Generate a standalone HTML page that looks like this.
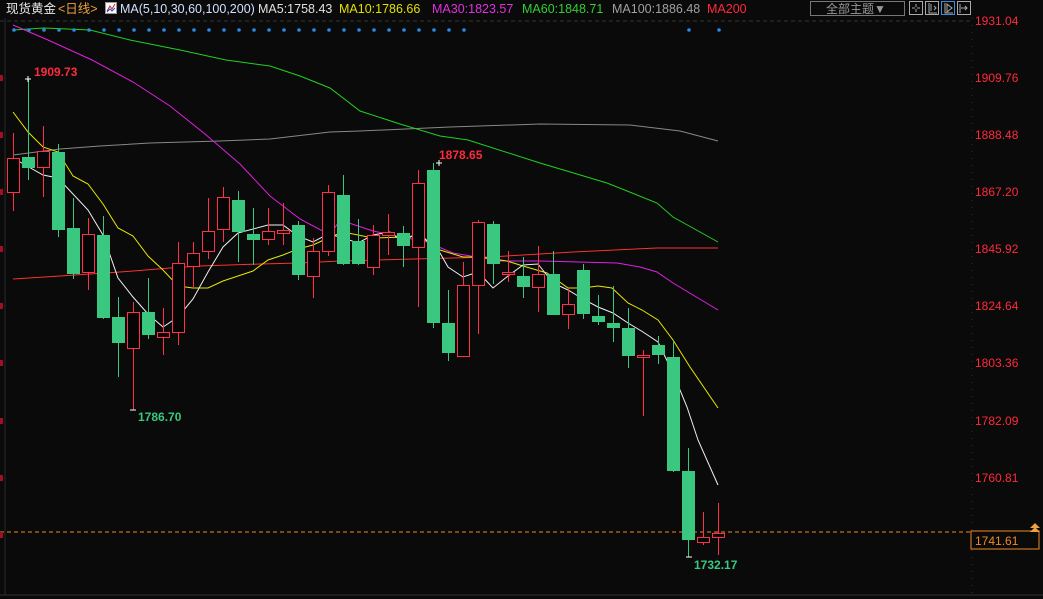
<!DOCTYPE html>
<html><head><meta charset="utf-8"><style>
body{margin:0;background:#0a0a0a;width:1043px;height:599px;overflow:hidden;font-family:"Liberation Sans","Noto Sans CJK SC",sans-serif}
svg{position:absolute;left:0;top:0}
.hd span{position:absolute;top:1px;font-size:12.5px;white-space:nowrap;color:#cfe0ff;line-height:16px}
</style></head><body>
<svg id="s" width="1043" height="599" xmlns="http://www.w3.org/2000/svg">
<line x1="5" y1="18" x2="5" y2="595" stroke="#2a2a2a"/>
<line x1="972" y1="18" x2="972" y2="595" stroke="#333" stroke-dasharray="1,6"/>
<line x1="0" y1="21" x2="970" y2="21" stroke="#333" stroke-dasharray="4,3"/>
<line x1="0" y1="595" x2="1043" y2="595" stroke="#333"/>
<line x1="0" y1="532" x2="970" y2="532" stroke="#f08a20" stroke-dasharray="4,3"/>
<g id="lines" fill="none" stroke-width="1"></g>
<g id="c"></g>
<g font-size="12" fill="#ff2a3a">
<text x="975" y="25">1931.04</text><text x="975" y="82">1909.76</text><text x="975" y="139">1888.48</text><text x="975" y="196">1867.20</text><text x="975" y="253">1845.92</text><text x="975" y="310">1824.64</text><text x="975" y="367">1803.36</text><text x="975" y="425">1782.09</text><text x="975" y="482">1760.81</text>
</g>
<rect x="971" y="531" width="68" height="18" fill="#0a0a0a" stroke="#f08a20"/>
<text x="975" y="545" font-size="12" fill="#f08a20">1741.61</text>
<path d="M1030 528 l5 -5 l5 5 z M1030 532 l5 -5 l5 5 z" fill="#f0a040"/>
<g font-size="12" font-weight="bold">
<text x="34" y="76" fill="#ff2a3a">1909.73</text>
<text x="138" y="421" fill="#3ac77f">1786.70</text>
<text x="439" y="159" fill="#ff2a3a">1878.65</text>
<text x="694" y="569" fill="#3ac77f">1732.17</text>
</g>
<g stroke="#fff"><path d="M25 79h6M28 76v6M130 410h6M436 163h6M439 160v6M686 557h6"/></g>
<rect x="810.5" y="1.5" width="94" height="14" fill="#0a0a0a" stroke="#777"/>
<text x="826" y="13" font-size="12" fill="#999">全部主题▼</text>
<g fill="none" stroke="#aaa">
<rect x="909.5" y="1.5" width="13" height="13"/><rect x="925.5" y="1.5" width="13" height="13"/><rect x="941.5" y="1.5" width="13" height="13" stroke="#3a8fe0"/><rect x="957.5" y="1.5" width="13" height="13"/>
<path d="M916 4v3M916 9v3M912 8h3M917 8h3M929 3v10h8M931 4v7M934 6l2 2-2 2M945 3v10h8M947 4l5 4-5 4z" />
<path d="M960 4v9M961 8h6M965 6l2 2-2 2"/>
</g>
<rect x="105.5" y="2.5" width="11" height="11" fill="#fff" stroke="#999"/>
<path d="M107 11l3-5 2 3 3-5" fill="none" stroke="#d02020"/>
<path d="M107 12l3-3 2 2 3-3" fill="none" stroke="#2050d0"/>
</svg>
<div class="hd"><span style="left:6px;color:#e8e8e8">现货黄金</span><span style="left:58px;color:#f0a040">&lt;日线&gt;</span><span style="left:120px">MA(5,10,30,60,100,200)</span><span style="left:258px;color:#e0e0e0">MA5:1758.43</span><span style="left:339px;color:#e0e000">MA10:1786.66</span><span style="left:432px;color:#e030e0">MA30:1823.57</span><span style="left:522px;color:#30d030">MA60:1848.71</span><span style="left:612px;color:#a0a0a0">MA100:1886.48</span><span style="left:707px;color:#ff2a3a">MA200</span></div>
<script>
var NS="http://www.w3.org/2000/svg",s=document.getElementById("c"),L=document.getElementById("lines");
function el(p,t,a){var e=document.createElementNS(NS,t);for(var k in a)e.setAttribute(k,a[k]);p.appendChild(e);return e;}
function pl(pts,col){el(L,"polyline",{points:pts,stroke:col});}
pl("13,279 60,276 120,272 170,268 200,266 260,264 300,263 340,261 490,257 573,252 657,248 718,248","#ff3030");
pl("13,155 60,149 100,146 150,143 220,141 270,139 330,132 360,131 450,127 540,124 630,125 680,131 718,141","#888");
pl("13,30 44,28 90,30 130,40 180,50 226,60 270,66 300,76 330,88 360,111 400,124 440,136 468,140 540,163 607,183 657,203 673,217 718,242","#20d020");
pl("13,25 48,40 92,60 133,82 170,106 205,134 240,164 270,196 300,219 330,235 340,220 373,231 407,238 427,242 453,253 500,261 540,261 617,263 640,267 657,272 673,283 718,310","#e020e0");
pl("13,112 28,132 43,147 58,152 73,176 88,184 103,204 118,228 133,236 148,256 163,270 178,286 193,288 208,288 223,281 238,276 253,271 268,260 283,255 298,249 313,245 328,238 343,232 373,238 407,237 418,235 440,250 463,257 480,257 507,261 523,266 547,273 568,288 583,288 598,286 612,288 628,303 642,310 658,320 673,340 690,367 718,408","#e8e800");
pl("13,158 43,175 58,178 88,210 103,235 118,278 133,297 148,314 163,327 178,317 193,299 208,272 223,247 238,233 268,225 283,225 298,236 313,242 328,234 340,237 358,243 373,235 390,232 403,242 418,232 440,253 448,267 463,277 478,272 493,288 508,276 523,265 538,264 553,283 568,290 583,299 598,307 613,313 628,323 643,332 658,342 673,373 687,407 698,440 718,485","#f0f0f0");
var d=[["r",158,192,133,211],["g",157,168,79,180],["r",151,167,126,197],["g",152,230,144,237],["g",228,274,198,279],["r",234,272,218,290],["g",235,318,216,319],["g",317,343,297,377],["r",312,348,302,410],["g",312,335,278,339],["r",332,337,308,355],["r",263,332,242,345],["r",253,266,242,288],["r",231,251,198,259],["r",197,229,187,242],["g",200,232,191,262],["g",234,240,208,265],["r",231,239,208,245],["r",230,233,203,245],["g",225,275,221,280],["r",251,276,238,298],["r",192,251,185,256],["g",195,264,175,265],["g",241,264,219,265],["r",235,267,225,275],["r",232,235,214,255],["g",233,246,226,267],["r",183,247,170,307],["g",170,323,163,328],["g",323,353,290,361],["r",285,356,262,356],["r",222,285,220,334],["g",224,264,221,284],["r",272,274,251,282],["g",276,287,257,298],["r",274,287,246,312],["g",274,315,251,315],["r",304,314,289,329],["g",270,314,264,319],["g",316,322,295,325],["g",323,328,286,342],["g",328,356,308,368],["r",355,357,350,416],["g",345,355,336,364],["g",357,471,342,472],["g",471,540,448,557],["r",537,542,512,545],["r",533,537,503,555]];
d.forEach(function(c,i){var x=13+15*i,g=c[0]=="g",col=g?"#3ac77f":"#ff3048";
el(s,"line",{x1:x+.5,y1:c[3],x2:x+.5,y2:c[4],stroke:col});
if(g)el(s,"rect",{x:x-6,y:c[1],width:13,height:Math.max(1,c[2]-c[1]),fill:col});
else el(s,"rect",{x:x-5.5,y:c[1]+.5,width:12,height:Math.max(1,c[2]-c[1]),fill:"#050505",stroke:col});});
for(var x=14;x<=465;x+=15)el(s,"circle",{cx:x,cy:30,r:1.8,fill:"#2a8ae0"});
el(s,"circle",{cx:689,cy:30,r:1.8,fill:"#2a8ae0"});el(s,"circle",{cx:719,cy:30,r:1.8,fill:"#2a8ae0"});
[78,135,192,249,306,363,421,478,535].forEach(function(y){el(s,"rect",{x:0,y:y-3,width:3,height:6,fill:"#a01020"});});
</script>
</body></html>
